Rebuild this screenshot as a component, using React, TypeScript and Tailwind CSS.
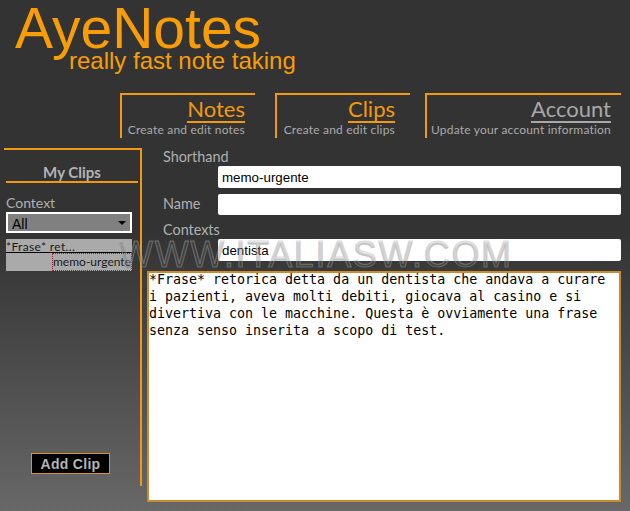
const orange = "border-[#f2990f]";

function Tab({ title, sub, active, className }: { title: string; sub: string; active?: boolean; className: string }) {
  return (
    <div className={`h-[45px] border-t-2 border-l-2 ${orange} text-right font-['Lato',sans-serif] ${className}`}>
      <div className="flex justify-end pt-[2px]">
        <span
          className={`border-b-2 text-[22px] leading-[24px] ${
            active ? "border-[#f2990f] text-[#f2990f]" : "border-[#a8a8a8] text-[#a8a8a8]"
          }`}
        >
          {title}
        </span>
      </div>
      <div className="whitespace-nowrap text-[12px] leading-[14px] tracking-[0.2px] text-[#aaaaaa]">{sub}</div>
    </div>
  );
}

function Field({ label, value }: { label: string; value: string }) {
  return (
    <div>
      <div className="pl-[16px] font-['Lato',sans-serif] text-[14.4px] leading-[18px] text-[#b0b0b0]">{label}</div>
      <input
        readOnly
        value={value}
        className="ml-[71px] block h-[22px] w-[403px] rounded-[2px] bg-white px-[4px] text-[13.33px] text-black outline-none"
      />
    </div>
  );
}

export default function App() {
  return (
    <div className="relative h-[511px] w-[630px] overflow-hidden bg-gradient-to-b from-[#333333] from-45% to-[#686868] font-['Liberation_Sans',sans-serif]">
      <header className="h-[93px] pl-[15px] text-[#f99d07]">
        <div className="whitespace-nowrap text-[57px] leading-[56px]">AyeNotes</div>
        <div className="mt-[-9px] whitespace-nowrap pl-[54px] text-[24px] leading-[28px]">really fast note taking</div>
      </header>

      <nav className="flex pl-[120px]">
        <Tab title="Notes" sub="Create and edit notes" active className="w-[135px] pr-[10px]" />
        <Tab title="Clips" sub="Create and edit clips" active className="ml-[20px] w-[135px] pr-[15px]" />
        <Tab title="Account" sub="Update your account information" className="ml-[15px] w-[196px] pr-[10px]" />
      </nav>

      <div className="mt-[10px] flex">
        <aside className={`ml-[4px] flex h-[338px] w-[138px] flex-col border-t-2 border-r-2 ${orange} pl-[2px]`}>
          <div className={`mr-[2px] h-[33px] border-b-2 ${orange} pt-[12px] text-center font-['Lato',sans-serif] text-[15px] font-bold leading-[20px] text-[#b4b4b4]`}>
            My Clips
          </div>
          <div className="mt-[11px] font-['Lato',sans-serif] text-[14px] leading-[18px] text-[#b0b0b0]">Context</div>
          <div className="relative h-[21px] w-[126px]">
            <select className="block h-full w-full appearance-none border-2 border-white bg-[#808080] px-[4px] text-[14px] text-black outline-none">
              <option>All</option>
            </select>
            <div className="absolute right-[6px] top-[9px] h-0 w-0 border-x-[4px] border-t-[4px] border-x-transparent border-t-black" />
          </div>
          <div className="mt-[6px] h-[32px] w-[126px] bg-[#aaaaaa] font-['Lato',sans-serif] text-[12px] text-[#1a1a1a]">
            <div className="h-[14px] border-b border-black leading-[15px] tracking-[0.35px]">*Frase* ret...</div>
            <div className="ml-[46px] h-[18px] whitespace-nowrap border border-dotted border-[#c0102a] leading-[16px]">
              memo-urgente
            </div>
          </div>
          <button className="mb-[12px] ml-[25px] mt-auto h-[21px] w-[79px] border border-[#d8952f] bg-black text-[14px] font-bold leading-none tracking-[0.3px] text-[#b4b4b4]">
            Add Clip
          </button>
        </aside>

        <main className="ml-[5px] flex flex-col">
          <div className="flex flex-col">
            <Field label="Shorthand" value="memo-urgente" />
            <div className="mt-[6px] flex h-[21px]">
              <div className="w-[71px] pl-[16px] font-['Lato',sans-serif] text-[14.4px] leading-[19px] text-[#b0b0b0]">Name</div>
              <input
                readOnly
                value=""
                className="block h-[21px] w-[403px] rounded-[2px] bg-white px-[4px] outline-none"
              />
            </div>
            <div className="mt-[6px]">
              <Field label="Contexts" value="dentista" />
            </div>
          </div>
          <div className="mt-[10px] h-[231px] w-[474px] overflow-hidden border-2 border-[#cc8a2c] bg-white font-['DejaVu_Sans_Mono',monospace] text-[13.3px] leading-[17px] text-black">
            <div className="mt-[-2px]">
              *Frase* retorica detta da un dentista che andava a curare i pazienti, aveva molti debiti, giocava al casino e si divertiva con le macchine. Questa è ovviamente una frase senza senso inserita a scopo di test.
            </div>
          </div>
        </main>
      </div>

      <div className="pointer-events-none absolute left-[119px] top-[237px] whitespace-nowrap text-[36px] leading-[36px] tracking-[1.65px] text-white/10 [-webkit-text-stroke:1px_rgba(170,170,170,0.45)] [text-shadow:0_1px_1px_rgba(0,0,0,0.2)]">
        WWW.ITALIASW.COM
      </div>
    </div>
  );
}
